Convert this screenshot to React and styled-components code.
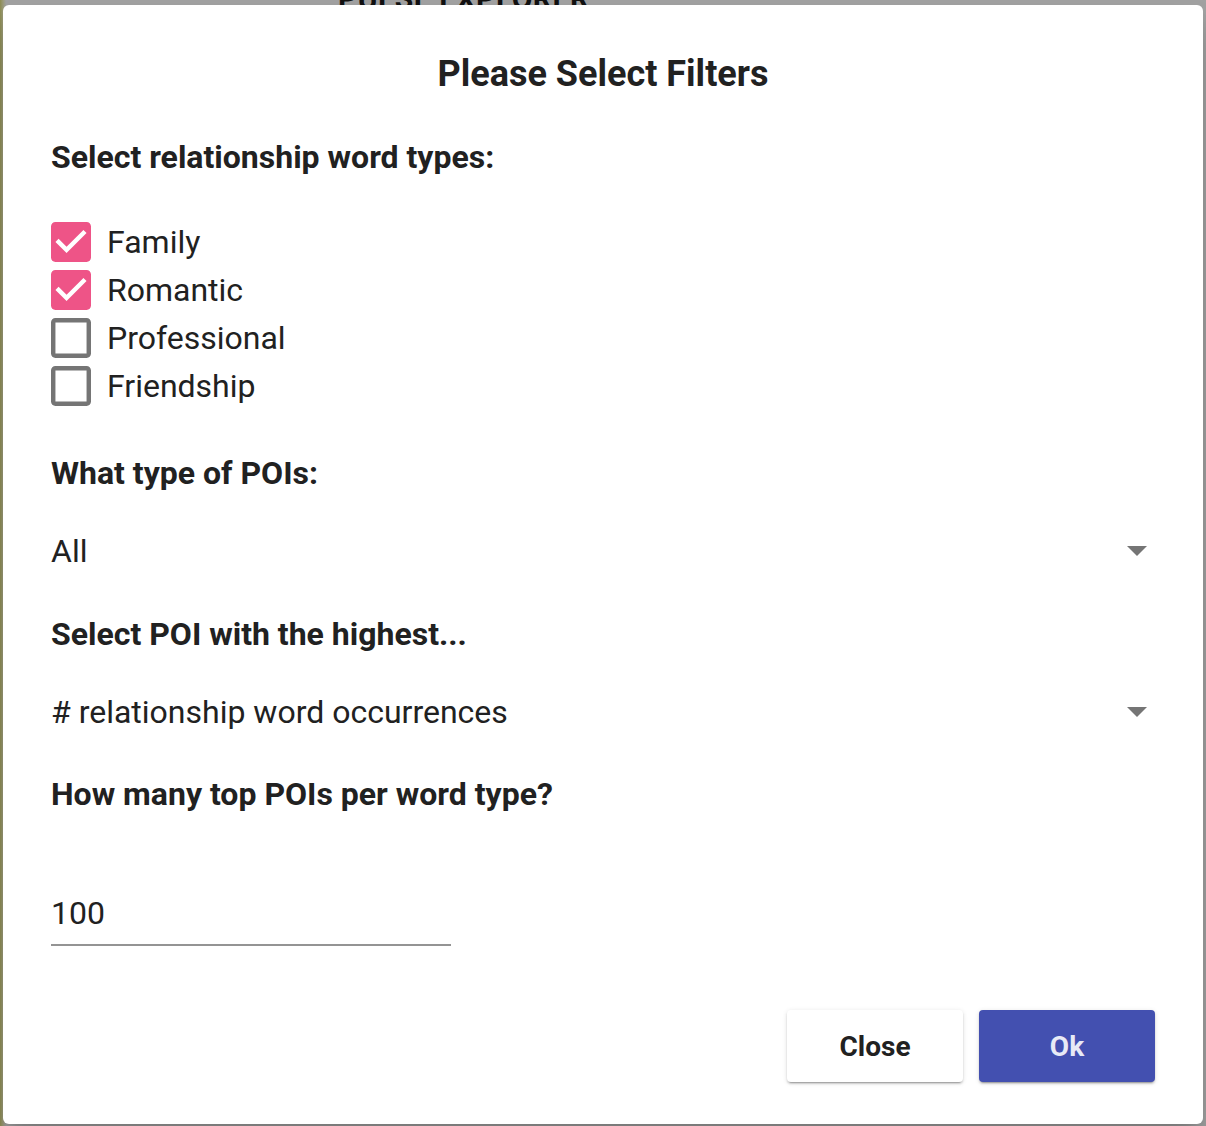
import React, { useState } from 'react';
import styled, { createGlobalStyle } from 'styled-components';

const GlobalStyle = createGlobalStyle`
  html, body {
    margin: 0;
    padding: 0;
  }
  body {
    font-family: Roboto, "Liberation Sans", Arial, sans-serif;
    background: #a2a2a2;
    overflow: hidden;
  }
`;

const Page = styled.div`
  position: relative;
  width: 1206px;
  height: 1126px;
  background: linear-gradient(to right, #8e8d52 0px, #9b9b7a 3px, #a2a2a2 6px);
  overflow: hidden;
`;

const BehindTitle = styled.div`
  position: absolute;
  top: -19px;
  left: 338px;
  font-size: 30px;
  font-weight: 700;
  letter-spacing: 0.5px;
  color: #111;
`;

const Backdrop = styled.div`
  position: absolute;
  inset: 0;
  display: flex;
  justify-content: center;
  padding-top: 5px;
`;

const Dialog = styled.div`
  width: 1200px;
  height: 1119px;
  box-sizing: border-box;
  background: #fff;
  border-radius: 6px;
  box-shadow: 0 11px 15px -7px rgba(0, 0, 0, 0.2), 0 24px 38px 3px rgba(0, 0, 0, 0.14);
  display: flex;
  flex-direction: column;
  padding: 0 48px;
`;

const Title = styled.h2`
  margin: 0;
  padding: 49px 0 43px;
  text-align: center;
  font-size: 36px;
  line-height: 40px;
  font-weight: 700;
  color: #212121;
`;

const Label = styled.div`
  font-size: 32px;
  line-height: 40px;
  font-weight: 700;
  color: #212121;
  margin-top: ${(p) => p.$top || 0}px;
`;

const CheckList = styled.div`
  display: flex;
  flex-direction: column;
  gap: 8px;
  margin-top: 45px;
`;

const CheckRow = styled.label`
  display: flex;
  align-items: center;
  gap: 16px;
  cursor: pointer;
`;

const BoxIcon = styled.svg`
  display: block;
  width: 40px;
  height: 40px;
  flex: none;
`;

const ItemText = styled.span`
  font-size: 32px;
  line-height: 40px;
  color: #212121;
`;

const SelectBox = styled.div`
  display: flex;
  align-items: center;
  justify-content: space-between;
  height: 56px;
  margin-top: ${(p) => p.$top || 0}px;
  padding-right: 8px;
  font-size: 32px;
  color: #212121;
  cursor: pointer;
`;

const NumberField = styled.input`
  width: 400px;
  margin-top: 79px;
  padding: 0 0 11px;
  border: none;
  border-bottom: 2px solid #949494;
  outline: none;
  font-family: inherit;
  font-size: 32px;
  line-height: 40px;
  color: #212121;
  background: transparent;
`;

const Actions = styled.div`
  margin-top: auto;
  display: flex;
  justify-content: flex-end;
  gap: 16px;
  padding-bottom: 42px;
`;

const Button = styled.button`
  width: 176px;
  height: 72px;
  border: none;
  border-radius: 4px;
  font-family: inherit;
  font-size: 28px;
  font-weight: 700;
  cursor: pointer;
  background: ${(p) => (p.$primary ? '#4350b0' : '#fff')};
  color: ${(p) => (p.$primary ? '#e8eaf6' : '#212121')};
  box-shadow: 0 3px 1px -2px rgba(0, 0, 0, 0.2), 0 2px 2px 0 rgba(0, 0, 0, 0.14),
    0 1px 5px 0 rgba(0, 0, 0, 0.12);
`;

// material checkbox glyphs, cropped to the 18x18 box
const CheckBox = ({ on }) => (
  <BoxIcon viewBox="3 3 18 18">
    {on ? (
      <path
        fill="#ee5487"
        d="M19 3H5c-1.11 0-2 .9-2 2v14c0 1.1.89 2 2 2h14c1.11 0 2-.9 2-2V5c0-1.1-.89-2-2-2zm-9 14l-5-5 1.41-1.41L10 14.17l7.59-7.59L19 8l-9 9z"
      />
    ) : (
      <path
        fill="#757575"
        d="M19 5v14H5V5h14m0-2H5c-1.1 0-2 .9-2 2v14c0 1.1.9 2 2 2h14c1.1 0 2-.9 2-2V5c0-1.1-.9-2-2-2z"
      />
    )}
  </BoxIcon>
);

const Arrow = () => (
  <svg width="20" height="10" viewBox="0 0 20 10">
    <path d="M0 0h20L10 10z" fill="#757575" />
  </svg>
);

const types = ['Family', 'Romantic', 'Professional', 'Friendship'];

export default function App() {
  const [checked, setChecked] = useState({ Family: true, Romantic: true });
  const [count, setCount] = useState('100');

  return (
    <Page>
      <GlobalStyle />
      <BehindTitle>PULSE EXPLORER</BehindTitle>
      <Backdrop>
        <Dialog>
          <Title>Please Select Filters</Title>
          <Label>Select relationship word types:</Label>
          <CheckList>
            {types.map((t) => (
              <CheckRow key={t} onClick={() => setChecked({ ...checked, [t]: !checked[t] })}>
                <CheckBox on={!!checked[t]} />
                <ItemText>{t}</ItemText>
              </CheckRow>
            ))}
          </CheckList>
          <Label $top={47}>What type of POIs:</Label>
          <SelectBox $top={30}>
            <span>All</span>
            <Arrow />
          </SelectBox>
          <Label $top={35}>Select POI with the highest...</Label>
          <SelectBox $top={30}>
            <span># relationship word occurrences</span>
            <Arrow />
          </SelectBox>
          <Label $top={34}>How many top POIs per word type?</Label>
          <NumberField value={count} onChange={(e) => setCount(e.target.value)} />
          <Actions>
            <Button>Close</Button>
            <Button $primary>Ok</Button>
          </Actions>
        </Dialog>
      </Backdrop>
    </Page>
  );
}
